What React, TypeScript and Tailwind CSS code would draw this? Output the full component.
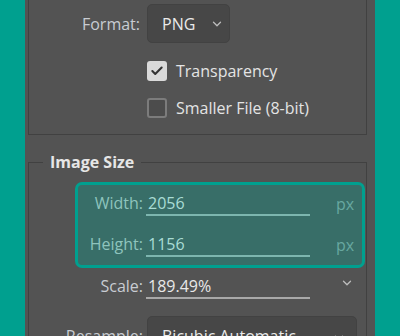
import { Check, ChevronDown } from "lucide-react";

const font = { fontFamily: '"Open Sans", "Noto Sans", sans-serif' };

const Chevron = ({ className }: { className?: string }) => (
  <ChevronDown className={className} strokeWidth={2.25} />
);

const CheckRow = ({ label, checked }: { label: string; checked?: boolean }) => (
  <div className="flex items-center gap-[9px] pl-[118px]">
    {checked ? (
      <span className="flex h-[20px] w-[20px] items-center justify-center rounded-[3px] bg-[#dadada]">
        <Check className="h-[14px] w-[14px] text-[#333]" strokeWidth={3.5} />
      </span>
    ) : (
      <span className="h-[20px] w-[20px] rounded-[3px] border-2 border-[#7c7c7c] bg-[#4c4c4c]" />
    )}
    <span className="text-[16px] leading-[20px] text-[#e4e4e4]">{label}</span>
  </div>
);

const SizeRow = ({ label, value }: { label: string; value: string }) => (
  <div className="flex items-end">
    <span className="w-[65px] pb-[3px] text-right text-[16px] leading-[20px] text-[#8ec4bd]">
      {label}
    </span>
    <div className="ml-[3px] w-[164px] border-b-2 border-[#7db6af] pb-[1px] pl-[2px] text-[16px] leading-[20px] text-[#a9dcd5]">
      {value}
    </div>
    <span className="ml-[26px] pb-[2px] text-[16px] leading-[20px] text-[#67a8a0]">px</span>
  </div>
);

export default function App() {
  return (
    <div className="flex h-[336px] w-[400px] overflow-hidden bg-[#00a08f]" style={font}>
      <div className="w-[25px] shrink-0" />
      <div className="flex w-[350px] shrink-0 flex-col bg-[#535353] pl-[3px] pr-[8px]">
        <div className="flex h-[135px] shrink-0 flex-col border-x border-b border-[#414141]">
          <div className="mt-[4px] flex items-center">
            <span className="w-[111px] text-right text-[16px] text-[#c8ccd2]">Format:</span>
            <div className="ml-[7px] flex h-[39px] w-[83px] items-center justify-between rounded-[5px] border border-[#424242] bg-[#474747] pl-[14px] pr-[5px]">
              <span className="text-[16px] text-[#eaeaea]">PNG</span>
              <Chevron className="h-[14px] w-[14px] text-[#bdbdbd]" />
            </div>
          </div>
          <div className="mt-[18px]">
            <CheckRow label="Transparency" checked />
          </div>
          <div className="mt-[17px]">
            <CheckRow label="Smaller File (8-bit)" />
          </div>
        </div>

        <fieldset className="mt-[17px] flex-1 border border-[#414141] pl-[14px]">
          <legend className="px-[7px] text-[16px] font-bold leading-[20px] text-[#e6e6e6]">
            Image Size
          </legend>
          <div className="ml-[32px] mr-[1px] mt-[10px] flex h-[86px] flex-col justify-center gap-[18px] rounded-[7px] border-[3px] border-[#00a08f] bg-[#386e68]">
            <SizeRow label="Width:" value="2056" />
            <SizeRow label="Height:" value="1156" />
          </div>
          <div className="ml-[32px] mt-[8px] flex items-end">
            <span className="w-[68px] pb-[3px] text-right text-[16px] leading-[20px] text-[#c8ccd2]">
              Scale:
            </span>
            <div className="ml-[3px] w-[164px] border-b-2 border-[#a8a8a8] pb-[1px] pl-[2px] text-[16px] leading-[20px] text-[#e8e8e8]">
              189.49%
            </div>
            <Chevron className="mb-[9px] ml-[30px] h-[14px] w-[14px] text-[#bdbdbd]" />
          </div>
          <div className="mt-[17px] flex items-start">
            <span className="mt-[10px] w-[100px] text-right text-[16px] leading-[20px] text-[#c8ccd2]">
              Resample:
            </span>
            <div className="ml-[4px] flex h-[39px] w-[210px] items-start justify-between rounded-[5px] border border-[#424242] bg-[#474747] pl-[14px] pr-[10px] pt-[9px]">
              <span className="text-[16px] leading-[20px] text-[#eaeaea]">Bicubic Automatic</span>
              <Chevron className="mt-[5px] h-[14px] w-[14px] text-[#bdbdbd]" />
            </div>
          </div>
        </fieldset>
      </div>
      <div className="flex-1" />
    </div>
  );
}
